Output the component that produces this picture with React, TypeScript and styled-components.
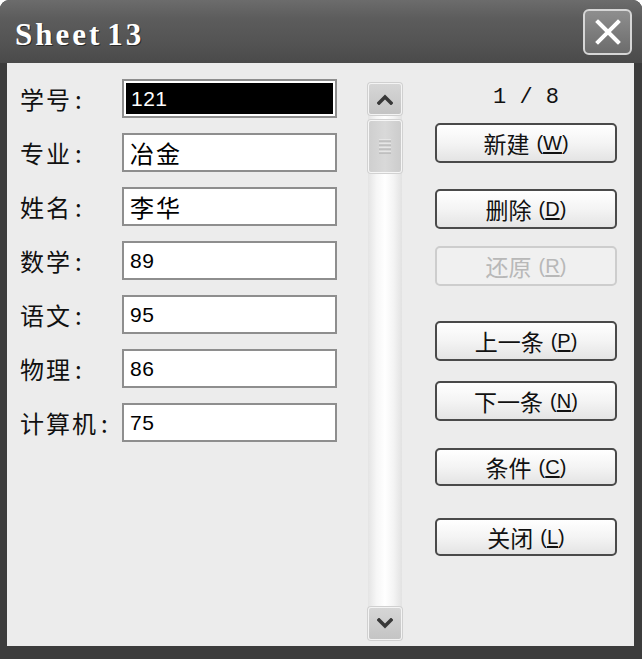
import React from 'react';
import styled, { createGlobalStyle } from 'styled-components';

const Global = createGlobalStyle`
  html, body { margin: 0; padding: 0; background: #ffffff; }
  body { font-family: "Liberation Sans", "Noto Sans CJK SC", sans-serif; }
`;

const Window = styled.div`
  width: 642px;
  height: 659px;
  box-sizing: border-box;
  display: flex;
  flex-direction: column;
  background: #3c3c3c;
  border-radius: 9px 9px 0 0;
  overflow: hidden;
`;

const TitleBar = styled.div`
  height: 63px;
  flex: none;
  box-sizing: border-box;
  padding: 6px 10px 0 15px;
  display: flex;
  align-items: center;
  justify-content: space-between;
  background: linear-gradient(#6c6c6c 0%, #5c5c5c 30%, #535353 70%, #4a4a4a 100%);
`;

const Title = styled.div`
  font-family: "Liberation Serif", serif;
  font-weight: bold;
  font-size: 31px;
  letter-spacing: 3px;
  color: #ffffff;
  text-shadow: 1px 1px 0 #2a2a2a;
`;

const TitleNum = styled.span`
  margin-left: 5px;
`;

const CloseButton = styled.div`
  width: 49px;
  height: 46px;
  margin-top: -6px;
  box-sizing: border-box;
  border: 2px solid #d6d6d6;
  border-radius: 6px;
  background: linear-gradient(#8e8e8e, #6c6c6c);
  display: flex;
  align-items: center;
  justify-content: center;
`;

const Body = styled.div`
  flex: 1;
  margin: 0 8px 13px 7px;
  background: #ececec;
  display: flex;
  box-sizing: border-box;
  padding: 16px 0 6px 13px;
`;

const Form = styled.div`
  display: flex;
  flex-direction: column;
  gap: 15px;
  width: 317px;
`;

const Row = styled.div`
  display: flex;
  align-items: center;
  height: 39px;
`;

const Label = styled.div`
  width: 102px;
  font-family: "Noto Sans CJK SC", sans-serif;
  font-size: 24px;
  letter-spacing: 2px;
  color: #111111;
  white-space: nowrap;
`;

const Colon = styled.span`
  margin-left: 3px;
`;

const Field = styled.div<{ $selected?: boolean }>`
  width: 215px;
  height: 39px;
  box-sizing: border-box;
  border: 2px solid #8e8e8e;
  background: #ffffff;
  display: flex;
  align-items: center;
  padding: ${(p) => (p.$selected ? '2px' : '0 6px')};
`;

const Selection = styled.div`
  flex: 1;
  align-self: stretch;
  background: #000000;
  color: #ffffff;
  display: flex;
  align-items: center;
  padding-left: 5px;
`;

const Value = styled.span<{ $cjk?: boolean }>`
  font-family: ${(p) => (p.$cjk ? '"Noto Sans CJK SC", sans-serif' : '"Liberation Sans", sans-serif')};
  font-size: ${(p) => (p.$cjk ? '24px' : '21px')};
  letter-spacing: ${(p) => (p.$cjk ? '2px' : '0.5px')};
  color: inherit;
`;

const ScrollColumn = styled.div`
  margin-left: 31px;
  padding-top: 4px;
  width: 34px;
  display: flex;
  flex-direction: column;
`;

const Track = styled.div`
  flex: 1;
  display: flex;
  flex-direction: column;
  background: linear-gradient(to right, #e4e4e4 0%, #f6f6f6 25%, #ffffff 50%, #f4f4f4 75%, #e2e2e2 100%);
`;

const ScrollButton = styled.div<{ $h: number }>`
  height: ${(p) => p.$h}px;
  box-sizing: border-box;
  border: 1px solid #f4f4f4;
  border-radius: 3px;
  background: linear-gradient(#d6d6d6, #c4c4c4);
  box-shadow: 0 0 0 1px #d0d0d0;
  display: flex;
  align-items: center;
  justify-content: center;
`;

const Thumb = styled.div`
  height: 53px;
  margin-top: 5px;
  box-sizing: border-box;
  border: 1px solid #f6f6f6;
  border-radius: 3px;
  background: linear-gradient(to right, #cfcfcf, #d9d9d9 50%, #cccccc);
  box-shadow: 0 0 0 1px #d2d2d2;
  display: flex;
  align-items: center;
  justify-content: center;
`;

const Spacer = styled.div`
  flex: 1;
`;

const RightColumn = styled.div`
  margin-left: 33px;
  width: 182px;
  padding-top: 4px;
  display: flex;
  flex-direction: column;
`;

const Counter = styled.div`
  height: 28px;
  display: flex;
  align-items: center;
  justify-content: center;
  font-family: "Liberation Mono", monospace;
  font-size: 22px;
  color: #111111;
  white-space: pre;
`;

const Button = styled.div<{ $top: number; $h: number; $disabled?: boolean }>`
  margin-top: ${(p) => p.$top}px;
  height: ${(p) => p.$h}px;
  box-sizing: border-box;
  border: 2px solid ${(p) => (p.$disabled ? '#cdcdcd' : '#4a4a4a')};
  border-radius: 5px;
  background: ${(p) => (p.$disabled ? '#f0f0f0' : 'linear-gradient(#ffffff, #f4f4f4 50%, #e4e4e4)')};
  color: ${(p) => (p.$disabled ? '#b8b8b8' : '#111111')};
  display: flex;
  align-items: center;
  justify-content: center;
  font-family: "Noto Sans CJK SC", sans-serif;
  font-size: 23px;
  white-space: nowrap;
`;

const Key = styled.span`
  margin-left: 7px;
  font-family: "Liberation Sans", sans-serif;
  font-size: 20px;
  u { text-underline-offset: 2px; }
`;

const fields: { label: string; value: string; cjk?: boolean; selected?: boolean }[] = [
  { label: '学号', value: '121', selected: true },
  { label: '专业', value: '冶金', cjk: true },
  { label: '姓名', value: '李华', cjk: true },
  { label: '数学', value: '89' },
  { label: '语文', value: '95' },
  { label: '物理', value: '86' },
  { label: '计算机', value: '75' },
];

const buttons: { text: string; key: string; top: number; h: number; disabled?: boolean }[] = [
  { text: '新建', key: 'W', top: 12, h: 40 },
  { text: '删除', key: 'D', top: 26, h: 40 },
  { text: '还原', key: 'R', top: 17, h: 40, disabled: true },
  { text: '上一条', key: 'P', top: 35, h: 40 },
  { text: '下一条', key: 'N', top: 20, h: 40 },
  { text: '条件', key: 'C', top: 27, h: 38 },
  { text: '关闭', key: 'L', top: 32, h: 38 },
];

const Chevron = ({ up }: { up?: boolean }) => (
  <svg width="16" height="11" viewBox="0 0 16 11">
    <path
      d={up ? 'M2 9 L8 3 L14 9' : 'M2 2 L8 8 L14 2'}
      fill="none"
      stroke="#383838"
      strokeWidth="3.5"
      strokeLinecap="square"
    />
  </svg>
);

const Grip = () => (
  <svg width="14" height="16" viewBox="0 0 14 16">
    {[2, 6, 10, 14].map((y) => (
      <g key={y}>
        <line x1="1" y1={y - 1} x2="13" y2={y - 1} stroke="#f4f4f4" strokeWidth="1" />
        <line x1="1" y1={y} x2="13" y2={y} stroke="#a8a8a8" strokeWidth="1" />
      </g>
    ))}
  </svg>
);

export default function App() {
  return (
    <>
      <Global />
      <Window>
        <TitleBar>
          <Title>
            Sheet<TitleNum>13</TitleNum>
          </Title>
          <CloseButton>
            <svg width="26" height="26" viewBox="0 0 26 26">
              <path d="M3 3 L23 23 M23 3 L3 23" stroke="#ffffff" strokeWidth="4" strokeLinecap="square" />
            </svg>
          </CloseButton>
        </TitleBar>
        <Body>
          <Form>
            {fields.map((f) => (
              <Row key={f.label}>
                <Label>
                  {f.label}
                  <Colon>:</Colon>
                </Label>
                <Field $selected={f.selected}>
                  {f.selected ? (
                    <Selection>
                      <Value $cjk={f.cjk}>{f.value}</Value>
                    </Selection>
                  ) : (
                    <Value $cjk={f.cjk}>{f.value}</Value>
                  )}
                </Field>
              </Row>
            ))}
          </Form>
          <ScrollColumn>
            <Track>
              <ScrollButton $h={32}>
                <Chevron up />
              </ScrollButton>
              <Thumb>
                <Grip />
              </Thumb>
              <Spacer />
              <ScrollButton $h={33}>
                <Chevron />
              </ScrollButton>
            </Track>
          </ScrollColumn>
          <RightColumn>
            <Counter>{'1 / 8'}</Counter>
            {buttons.map((b) => (
              <Button key={b.key} $top={b.top} $h={b.h} $disabled={b.disabled}>
                {b.text}
                <Key>
                  (<u>{b.key}</u>)
                </Key>
              </Button>
            ))}
          </RightColumn>
        </Body>
      </Window>
    </>
  );
}
